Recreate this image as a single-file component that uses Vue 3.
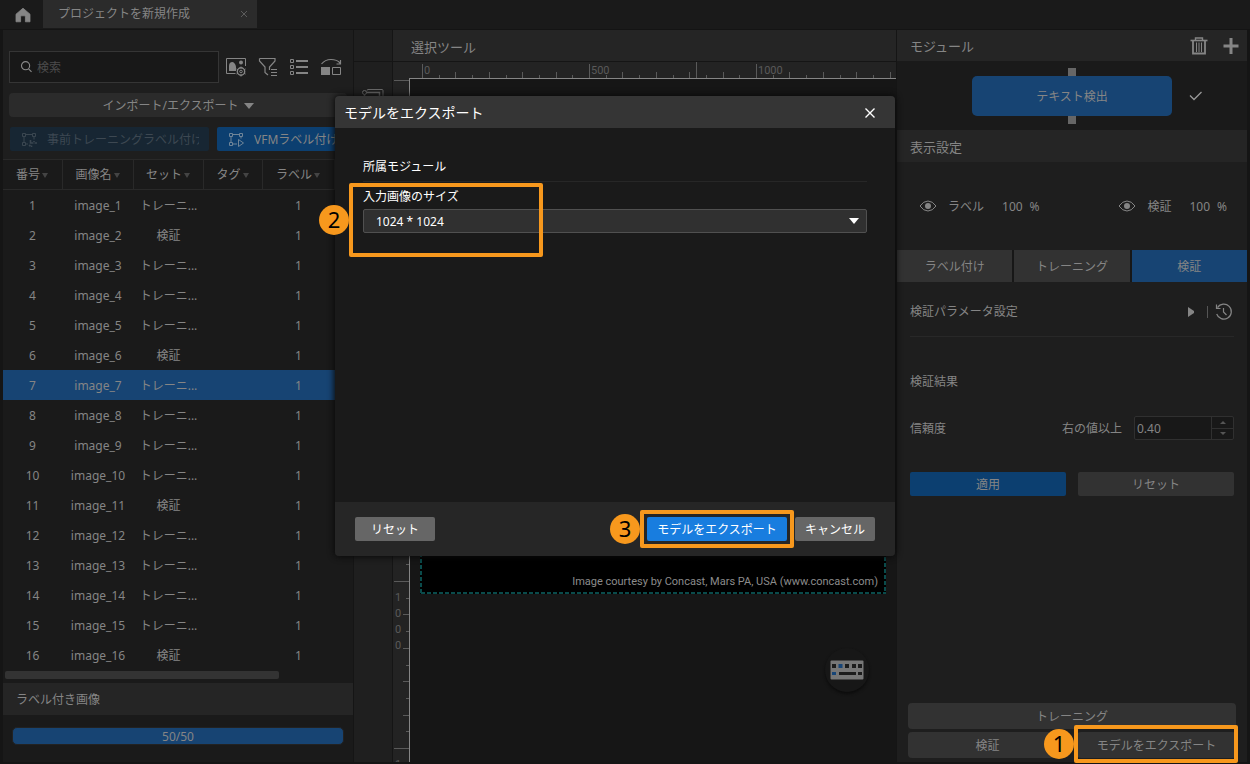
<script setup>
import { ref } from 'vue'

const columns = ['番号', '画像名', 'セット', 'タグ', 'ラベル']
const validation = [2, 6, 11, 16]
const rows = Array.from({ length: 16 }, (_, i) => ({
  no: i + 1,
  name: `image_${i + 1}`,
  set: validation.includes(i + 1) ? '検証' : 'トレーニ...',
}))
const selected = ref(7)
const query = ref('')
const size = ref('1024 * 1024')
const confidence = ref('0.40')
const tabs = ['ラベル付け', 'トレーニング', '検証']
const activeTab = ref('検証')

// Ruler graduations: one step is 50 image pixels, every tenth step is labelled.
const step = 16.7
const hTicks = Array.from({ length: 29 }, (_, i) => ({
  pos: Math.round(29 + i * step) + 0.5,
  from: i % 10 === 0 ? 2 : i % 2 === 0 ? 10 : 13,
}))
const vTicks = Array.from({ length: 41 }, (_, i) => ({
  pos: Math.round(i * step) + 1.5,
  from: i % 10 === 0 ? 1 : i % 2 === 0 ? 10 : 13,
}))
</script>

<template>
  <div class="app">
    <header class="topbar">
      <button class="home" aria-label="ホーム">
        <svg width="16" height="16" viewBox="0 0 16 16"><path d="M8 1.2 1 7.2V14.8H5.6V9.8Q5.6 8.8 6.6 8.8H9.4Q10.4 8.8 10.4 9.8V14.8H15V7.2Z" fill="#858585" stroke="#858585" stroke-width=".8" stroke-linejoin="round" /></svg>
      </button>
      <div class="project-tab">
        <span>プロジェクトを新規作成</span>
        <button class="tab-close" aria-label="閉じる">
          <svg width="8" height="8" viewBox="0 0 8 8"><path d="M1 1 7 7M7 1 1 7" stroke="#5c5c5c" /></svg>
        </button>
      </div>
    </header>

    <main class="workspace">
      <section class="left">
        <div class="search-row">
          <label class="search">
            <svg width="13" height="14" viewBox="0 0 14 14" fill="none" stroke="#8a8a8a" stroke-width="1.2"><circle cx="6" cy="5.6" r="4.4" /><path d="M9.2 9 12.4 12.2" /></svg>
            <input v-model="query" type="text" placeholder="検索" aria-label="検索" />
          </label>
          <button class="icon" aria-label="画像表示設定">
            <svg width="22" height="20" viewBox="0 0 22 20" fill="none" stroke="#858585"><path d="M10.500 16.500H1.500V1.500H20.500V9" /><path d="M4 14V9Q4 5 7.500 5Q10 5.500 11 9.500V14Z" fill="#858585" stroke="none" /><circle cx="16" cy="5.500" r="2" fill="#858585" stroke="none" /><circle cx="16" cy="14.500" r="3.700" stroke-width="1.400" /><circle cx="16" cy="14.500" r="1.300" /><path d="M16 9.500v2M16 17.500v2M11.500 12l1.500.9M19 16.100l1.500.9M11.500 17l1.500-.9M19 12.900l1.500-.9" /></svg>
          </button>
          <button class="icon" aria-label="フィルター">
            <svg width="20" height="20" viewBox="0 0 20 20" fill="none" stroke="#858585" stroke-width="1.200"><path d="M1.500 1.500H17V4L11.500 10V13M1.500 1.500V4L7 10V15.500L10 18" /><path d="M13 12.500H19M13 15.500H19M13 18.500H19" stroke-width="1" /></svg>
          </button>
          <button class="icon" aria-label="リスト">
            <svg width="20" height="18" viewBox="0 0 20 18" fill="none" stroke="#858585"><path d="M1.500 1.500h3v3h-3zM1.500 7.500h3v3h-3zM1.500 13.500h3v3h-3z" /><path d="M7 3H19M7 9H19M7 15H19" stroke-width="2" /></svg>
          </button>
          <button class="icon" aria-label="切り替え">
            <svg width="22" height="18" viewBox="0 0 22 18" fill="none" stroke="#858585"><path d="M1.500 6Q5 1.500 11 1.500Q17 1.500 20 5M20.500 2V6H16.500" stroke-width="1.200" /><path d="M1 9H10V17H1Z" fill="#858585" stroke="none" /><path d="M12.500 9.500h8v7h-8z" /></svg>
          </button>
        </div>

        <button class="text import">インポート/エクスポート<i class="caret"></i></button>

        <div class="label-row">
          <button class="text auto disabled" disabled>
            <svg width="17" height="16" viewBox="0 0 17 16" fill="none" stroke="#3a4650"><path d="M1.500 1.500h3v3h-3zM11.500 1.500h3v3h-3zM1.500 10.500h3v3h-3zM3 4.500v6M4.500 2.500h7M13 4.500v3M4.500 12H7" /><path d="M9.500 8V11H12.500M16 11H13.500M10.500 15V13.500M13 9v1M8 14l1.500-1" stroke-width="1.600" /></svg>
            <span>事前トレーニングラベル付け</span>
          </button>
          <button class="text auto">
            <svg width="17" height="16" viewBox="0 0 17 16" fill="none" stroke="#6f8598"><path d="M1.500 1.500h3v3h-3zM11.500 1.500h3v3h-3zM1.500 10.500h3v3h-3zM3 4.500v6M4.500 2.500h7M13 4.500v2M4.500 12H9" /><path d="M10.500 7.500V14.500L15.500 11Z" /></svg>
            <span>VFMラベル付け</span>
          </button>
        </div>

        <div class="table-wrap">
          <table>
            <colgroup>
              <col class="c1" /><col class="c2" /><col class="c3" /><col class="c4" /><col class="c5" /><col class="c6" />
            </colgroup>
            <thead>
              <tr><th v-for="c in columns" :key="c" scope="col">{{ c }}<i class="sort"></i></th><td class="rest"></td></tr>
            </thead>
            <tbody>
              <tr v-for="r in rows" :key="r.no" :class="{ selected: r.no === selected }" @click="selected = r.no">
                <td>{{ r.no }}</td>
                <td>{{ r.name }}</td>
                <td>{{ r.set }}</td>
                <td></td>
                <td>1</td>
                <td></td>
              </tr>
            </tbody>
          </table>
          <div class="hscroll"></div>
        </div>

        <h2 class="labeled">ラベル付き画像</h2>
        <div class="progress"><div class="progress-bar">50/50</div></div>
      </section>

      <aside class="tools">
        <button class="tool" aria-label="選択">
          <svg width="22" height="20" viewBox="0 0 22 20" fill="none" stroke="#6a6a6a"><path d="M5 1.500Q5 .5 6 .5H20Q21 .5 21 1.500V14" /><circle cx="2.500" cy="3.500" r="2" /><path d="M4.500 3.500H17.500V15M2.500 5.500V17" stroke-width="1.500" /></svg>
        </button>
      </aside>

      <section class="center">
        <h2 class="center-title">選択ツール</h2>
        <svg class="h-ruler" height="18">
          <g stroke="#5a5a5a">
            <line v-for="t in hTicks" :key="t.pos" :x1="t.pos" :x2="t.pos" :y1="t.from" y2="16" />
            <line x1="303.500" x2="303.500" y1="0" y2="16" />
          </g>
          <line x1="16" x2="100%" y1="16.500" y2="16.500" stroke="#858585" />
          <g class="ruler-text"><text x="31" y="12">0</text><text x="198" y="12">500</text><text x="365" y="12">1000</text></g>
        </svg>
        <div class="stage">
          <svg class="v-ruler" width="17">
            <g stroke="#5a5a5a">
              <line v-for="t in vTicks" :key="t.pos" :y1="t.pos" :y2="t.pos" :x1="t.from" x2="16" />
            </g>
            <line x1="16.500" x2="16.500" y1="0" y2="100%" stroke="#858585" />
            <g class="ruler-text">
              <text x="2" y="522">1</text><text x="2" y="538">0</text><text x="2" y="554">0</text><text x="2" y="570">0</text>
              <text x="2" y="689">1</text>
            </g>
          </svg>
          <div class="canvas">
            <div class="picture">
              <svg class="outline" width="100%" height="100%"><rect x="0" y="0" width="100%" height="100%" fill="none" stroke="#0a4b4b" stroke-width="4" stroke-dasharray="4 2" /></svg>
              <p>Image courtesy by Concast, Mars PA, USA (www.concast.com)</p>
            </div>
            <button class="keyboard" aria-label="キーボード">
              <svg width="34" height="20" viewBox="0 0 34 20"><rect x=".5" y=".5" width="33" height="19" rx="1" fill="#777" /><g fill="#1c1c1c"><path d="M2 4h4v4H2zM15 4h4v4h-4zM22 4h4v4h-4zM28 4h4v4h-4zM9 12h17v3H9zM28 12h4v3h-4z" /></g><path d="M8.500 4h4v4h-4zM2 12h4v3H2z" fill="#174577" /></svg>
            </button>
          </div>
        </div>
      </section>

      <section class="right">
        <div class="bar module-bar">
          <h2>モジュール</h2>
          <button aria-label="削除">
            <svg width="18" height="18" viewBox="0 0 18 18" fill="none" stroke="#858585"><path d="M.5 3.500H17.500" stroke-width="1.600" /><path d="M5.500 3V1H12.500V3" stroke-width="1.400" /><path d="M3 4V16.500H15V4" stroke-width="1.800" /><path d="M6.500 5.500V15M9 5.500V15M11.500 5.500V15" /></svg>
          </button>
          <button aria-label="追加">
            <svg width="16" height="16" viewBox="0 0 16 16"><path d="M8 0V16M.5 8H15.500" stroke="#858585" stroke-width="3" /></svg>
          </button>
        </div>
        <div class="module-area">
          <button class="text node">テキスト検出</button>
          <svg class="check" width="14" height="10" viewBox="0 0 14 10" fill="none"><path d="M1 4.500 5 8.500 12.500 1" stroke="#999" stroke-width="1.300" /></svg>
        </div>
        <div class="bar display-bar"><h2>表示設定</h2></div>
        <div class="display">
          <div v-for="d in ['ラベル', '検証']" :key="d" class="display-item">
            <button :aria-label="d + 'の表示'">
              <svg width="18" height="12" viewBox="0 0 18 12" fill="none"><path d="M1 6Q4.500 1 9 1T17 6Q13.500 11 9 11T1 6Z" stroke="#858585" /><circle cx="9" cy="6" r="3" fill="#858585" /></svg>
            </button>
            <span class="name">{{ d }}</span>
            <span>100</span><span class="unit">%</span>
          </div>
        </div>
        <div class="tabs" role="tablist">
          <button v-for="t in tabs" :key="t" class="text" role="tab" :aria-selected="t === activeTab" :class="{ active: t === activeTab }" @click="activeTab = t">{{ t }}</button>
        </div>
        <div class="params">
          <span class="grow">検証パラメータ設定</span>
          <button aria-label="展開"><svg width="7" height="10" viewBox="0 0 7 10"><path d="M0 0 6 4V6L0 10Z" fill="#858585" /></svg></button>
          <i class="sep"></i>
          <button aria-label="履歴">
            <svg width="18" height="18" viewBox="0 0 18 18" fill="none" stroke="#858585" stroke-width="1.200"><path d="M2.500 4.600A7.500 7.500 0 1 1 1.700 11" /><path d="M1.500 1.500V5.500H5.500" /><path d="M8.500 5V9L11.500 12" /></svg>
          </button>
        </div>
        <div class="results">
          <h3>検証結果</h3>
          <div class="confidence">
            <span class="grow">信頼度</span>
            <label for="confidence">右の値以上</label>
            <div class="spin">
              <input id="confidence" v-model="confidence" type="text" inputmode="decimal" />
              <div class="spin-buttons">
                <button aria-label="増やす"><i class="up"></i></button>
                <button aria-label="減らす"><i class="down"></i></button>
              </div>
            </div>
          </div>
          <div class="actions">
            <button class="text apply">適用</button>
            <button class="text">リセット</button>
          </div>
        </div>
        <div class="run">
          <button class="text wide">トレーニング</button>
          <button class="text">検証</button>
          <button class="text">モデルをエクスポート</button>
        </div>
      </section>
    </main>

    <div class="modal" role="dialog" aria-labelledby="dialog-title">
      <div class="modal-head">
        <h1 id="dialog-title">モデルをエクスポート</h1>
        <button aria-label="閉じる"><svg width="12" height="12" viewBox="0 0 12 12"><path d="M1.500 1.500 10.500 10.500M10.500 1.500 1.500 10.500" stroke="#fff" stroke-width="1.400" /></svg></button>
      </div>
      <div class="modal-body">
        <h3>所属モジュール</h3>
        <label for="size">入力画像のサイズ</label>
        <div class="select">
          <select id="size" v-model="size"><option>1024 * 1024</option></select>
          <i class="arrow"></i>
        </div>
      </div>
      <div class="modal-foot">
        <button class="text reset">リセット</button>
        <button class="text primary">モデルをエクスポート</button>
        <button class="text">キャンセル</button>
      </div>
    </div>

    <div class="mark mark-1"><span>1</span></div>
    <div class="mark mark-2"><span>2</span></div>
    <div class="mark mark-3"><span>3</span></div>
  </div>
</template>

<style>
body {
  background: #161616;
  overflow: hidden;
}
</style>

<style scoped>
.app,
.app * {
  box-sizing: border-box;
}
.app {
  position: relative;
  display: grid;
  grid-template-rows: 30px minmax(0, 1fr);
  height: 100vh;
  font: 12px/18px "Noto Sans", "Noto Sans CJK JP", sans-serif;
  color: #858585;
  background: #151515;
}
button,
input,
select {
  font: inherit;
  color: inherit;
  border: 0;
  margin: 0;
  padding: 0;
  background: none;
  white-space: nowrap;
}
button {
  display: flex;
  align-items: center;
  justify-content: center;
}
.text {
  padding-top: 2px;
}
svg {
  display: block;
  flex: none;
}
h1,
h2,
h3,
p {
  margin: 0;
  font-weight: 400;
}
h2 {
  font-size: 13px;
}
h3 {
  font-size: 12px;
}
.grow {
  flex: 1;
}

.topbar {
  display: flex;
  background: #1a1a1a;
  border-bottom: 1px solid #141414;
}
.home {
  width: 40px;
  margin-left: 3px;
}
.project-tab {
  display: flex;
  align-items: center;
  justify-content: space-between;
  width: 214px;
  height: 28px;
  padding: 0 9px 0 15px;
  background: #2b2b2b;
}

.workspace {
  display: grid;
  grid-template-columns: 350px 38px minmax(0, 1fr) 350px;
  gap: 1px;
  padding: 0 3px 2px;
}

.left {
  display: flex;
  flex-direction: column;
  min-width: 0;
  padding-top: 21px;
  background: #1a1a1a;
  box-shadow: inset 0 129px #1e1e1e;
}
.search-row {
  display: flex;
  align-items: center;
  gap: 11px;
  padding: 0 6px;
}
.search {
  display: flex;
  align-items: center;
  gap: 4px;
  width: 210px;
  height: 32px;
  margin-right: -5px;
  padding: 0 10px;
  border: 1px solid #353535;
  background: #181818;
}
.search input {
  width: 100%;
  padding-top: 2px;
  outline: 0;
}
.search input::placeholder {
  color: #4c4c4c;
}
.import {
  gap: 5px;
  height: 24px;
  margin: 10px 6px;
  border-radius: 4px;
  background: #2b2b2b;
}
.caret {
  border: 5px solid transparent;
  border-top: 6px solid #858585;
  border-bottom: 0;
}
.label-row {
  display: flex;
  gap: 8px;
  padding: 0 6px 0 7px;
}
.auto {
  flex: 1;
  justify-content: flex-start;
  gap: 9px;
  height: 24px;
  padding: 1px 10px 0 11px;
  border-radius: 2px;
  background: #0c3f70;
  overflow: hidden;
}
.auto span {
  overflow: hidden;
}
.auto.disabled {
  flex: none;
  width: 199px;
  background: #172633;
  color: #3d4852;
}
.table-wrap {
  position: relative;
  flex: 1;
  min-height: 0;
  margin-top: 8px;
  overflow: hidden;
}
table {
  width: 446px;
  table-layout: fixed;
  border-collapse: separate;
  border-spacing: 0;
}
.c1 { width: 60px; }
.c2 { width: 71px; }
.c3 { width: 70px; }
.c4 { width: 59px; }
.c5 { width: 72px; }
th,
td {
  height: 30px;
  padding: 2px 1px 0 0;
  font-weight: 400;
  text-align: center;
  overflow: hidden;
  white-space: nowrap;
}
th,
.rest {
  height: 31px;
  padding-top: 0;
  border: 1px solid #292929;
  border-left: 0;
}
.sort {
  display: inline-block;
  margin-left: 2px;
  vertical-align: 1px;
  border: 3px solid transparent;
  border-top: 5px solid #444;
  border-bottom: 0;
}
tr.selected {
  background: #174473;
}
.hscroll {
  position: absolute;
  left: 2px;
  bottom: 4px;
  width: 274px;
  height: 8px;
  border-radius: 2px;
  background: #333;
}
.labeled {
  padding: 8px 13px 6px;
  font-size: 12px;
  background: #252525;
}
.progress {
  height: 47px;
  padding: 12px 9px;
}
.progress-bar {
  height: 18px;
  line-height: 18px;
  text-align: center;
  border-radius: 5px;
  background: #174473;
  border: 1px solid #222;
}

.tools {
  display: flex;
  flex-direction: column;
  align-items: center;
  padding-top: 59px;
  background: linear-gradient(#151515, #151515) 0 31px / 100% 1px no-repeat #1f1f1f;
}

.center {
  display: flex;
  flex-direction: column;
  min-width: 0;
  background: #232323;
}
.center-title {
  height: 32px;
  padding: 8px 18px;
  background: #252525;
  border-bottom: 1px solid #151515;
}
.h-ruler {
  width: 100%;
  margin-bottom: -1px;
}
.ruler-text {
  fill: #5a5a5a;
  font: 11px Roboto, sans-serif;
}
.stage {
  display: flex;
  flex: 1;
  min-height: 0;
}
.v-ruler {
  height: 100%;
}
.canvas {
  position: relative;
  flex: 1;
  background: #161616;
  overflow: hidden;
}
.picture {
  position: absolute;
  left: 10px;
  right: 10px;
  top: 164px;
  height: 351px;
  background: #000;
}
.outline {
  position: absolute;
  inset: 0;
}
.picture p {
  position: absolute;
  right: 8px;
  bottom: 3px;
  font: 11px/18px Roboto, sans-serif;
  color: #8c8c8c;
}
.keyboard {
  position: absolute;
  right: 27px;
  bottom: 70px;
  width: 44px;
  height: 44px;
  border-radius: 50%;
  background: #171717;
  box-shadow: 0 2px 3px #0c0c0c;
}

.right {
  display: flex;
  flex-direction: column;
  min-width: 0;
  background: #1e1e1e;
}
.bar {
  display: flex;
  align-items: center;
  gap: 15px;
  height: 32px;
  padding: 0 9px 0 13px;
  background: #252525;
}
.bar h2 {
  flex: 1;
}
.module-bar {
  height: 31px;
  padding-right: 8px;
}
.display-bar {
  padding-top: 2px;
}
.module-area {
  position: relative;
  display: flex;
  align-items: center;
  justify-content: center;
  height: 69px;
  background: #1a1a1a;
}
.node {
  position: relative;
  width: 200px;
  height: 40px;
  border-radius: 5px;
  background: #174473;
}
.node::before,
.node::after {
  content: "";
  position: absolute;
  left: 96px;
  width: 8px;
  height: 8px;
  background: #666;
}
.node::before { top: -8px; }
.node::after { bottom: -8px; }
.check {
  position: absolute;
  right: 44px;
  top: 30px;
}
.display {
  display: flex;
  justify-content: space-between;
  align-items: center;
  height: 88px;
  padding: 0 20px 0 22px;
}
.display-item {
  display: flex;
  align-items: center;
}
.display-item span {
  padding-top: 2px;
}
.display-item .name {
  margin: 0 18px 0 11px;
}
.display-item .unit {
  margin-left: 7px;
}
.tabs {
  display: grid;
  grid-template-columns: repeat(3, 1fr);
  gap: 2px;
  background: #171717;
}
.tabs button {
  height: 32px;
  background: #323232;
}
.tabs .active {
  background: #174473;
}
.params {
  display: flex;
  align-items: center;
  height: 55px;
  margin: 0 13px;
  padding: 5px 1px 0 0;
  border-bottom: 1px solid #282828;
}
.sep {
  width: 1px;
  height: 12px;
  margin: 0 7px 0 12px;
  background: #555;
}
.results {
  display: flex;
  flex-direction: column;
  padding: 36px 13px 0;
}
.confidence {
  display: flex;
  align-items: center;
  gap: 12px;
  margin: 25px 0 32px;
}
.confidence span,
.confidence label {
  padding-top: 2px;
}
.spin {
  display: flex;
  width: 100px;
  height: 24px;
  border: 1px solid #303030;
  border-radius: 2px;
  background: #181818;
}
.spin input {
  flex: 1;
  min-width: 0;
  padding: 2px 0 0 2px;
}
.spin-buttons {
  display: grid;
  width: 22px;
  border-left: 1px solid #303030;
}
.spin-buttons button + button {
  border-top: 1px solid #303030;
}
.up,
.down {
  border: 3px solid transparent;
}
.up {
  border-top: 0;
  border-bottom-color: #555;
}
.down {
  border-bottom: 0;
  border-top-color: #555;
}
.actions {
  display: grid;
  grid-template-columns: 1fr 1fr;
  gap: 12px;
}
.actions button {
  height: 24px;
  border-radius: 2px;
  background: #323232;
}
.actions .apply {
  background: #0c3f70;
}
.run {
  display: grid;
  grid-template-columns: 1fr 1fr;
  gap: 3px 10px;
  margin: auto 11px 4px;
}
.run button {
  height: 26px;
  border-radius: 4px;
  background: #323232;
}
.run .wide {
  grid-column: span 2;
}

.modal {
  position: absolute;
  left: calc(50% - 290px);
  top: 96px;
  display: flex;
  flex-direction: column;
  width: 560px;
  height: 460px;
  border-radius: 4px;
  overflow: hidden;
  color: #fff;
  background: #1a1a1a;
  box-shadow: 0 0 6px 1px #0a0a0a;
}
.modal-head {
  display: flex;
  align-items: center;
  justify-content: space-between;
  height: 32px;
  padding: 2px 19px 0 9px;
  background: #353535;
}
.modal-head h1 {
  font-size: 14px;
}
.modal-body {
  display: flex;
  flex: 1;
  flex-direction: column;
  padding: 30px 28px 0;
}
.modal-body h3 {
  padding-bottom: 5px;
  margin-bottom: 6px;
  border-bottom: 1px solid #272727;
}
.select {
  position: relative;
  margin-top: 3px;
}
.select select {
  display: block;
  width: 100%;
  height: 24px;
  padding: 2px 12px 0;
  appearance: none;
  border: 1px solid #505050;
  border-radius: 2px;
  background: #303030;
}
.arrow {
  position: absolute;
  right: 8px;
  top: 9px;
  border: 5px solid transparent;
  border-top: 6px solid #fff;
  border-bottom: 0;
}
.modal-foot {
  display: flex;
  align-items: center;
  gap: 8px;
  height: 54px;
  padding: 0 20px;
  background: #262626;
}
.modal-foot button {
  width: 80px;
  height: 24px;
  border-radius: 2px;
  background: #666;
}
.modal-foot .reset {
  margin-right: auto;
}
.modal-foot .primary {
  width: 140px;
  background: #187ddf;
}

.mark {
  position: absolute;
  border: 4px solid #f7981d;
  border-radius: 2px;
  pointer-events: none;
}
.mark span {
  position: absolute;
  right: 100%;
  top: 50%;
  width: 30px;
  height: 30px;
  margin: -15px 4px 0 0;
  border-radius: 50%;
  font-size: 22px;
  line-height: 28px;
  text-align: center;
  color: #000;
  background: #f7981d;
}
.mark-1 {
  right: 12px;
  bottom: 1px;
  width: 164px;
  height: 38px;
}
.mark-2 {
  left: calc(50% - 276px);
  top: 183px;
  width: 194px;
  height: 74px;
}
.mark-3 {
  left: calc(50% + 15px);
  top: 510px;
  width: 154px;
  height: 38px;
}
</style>
